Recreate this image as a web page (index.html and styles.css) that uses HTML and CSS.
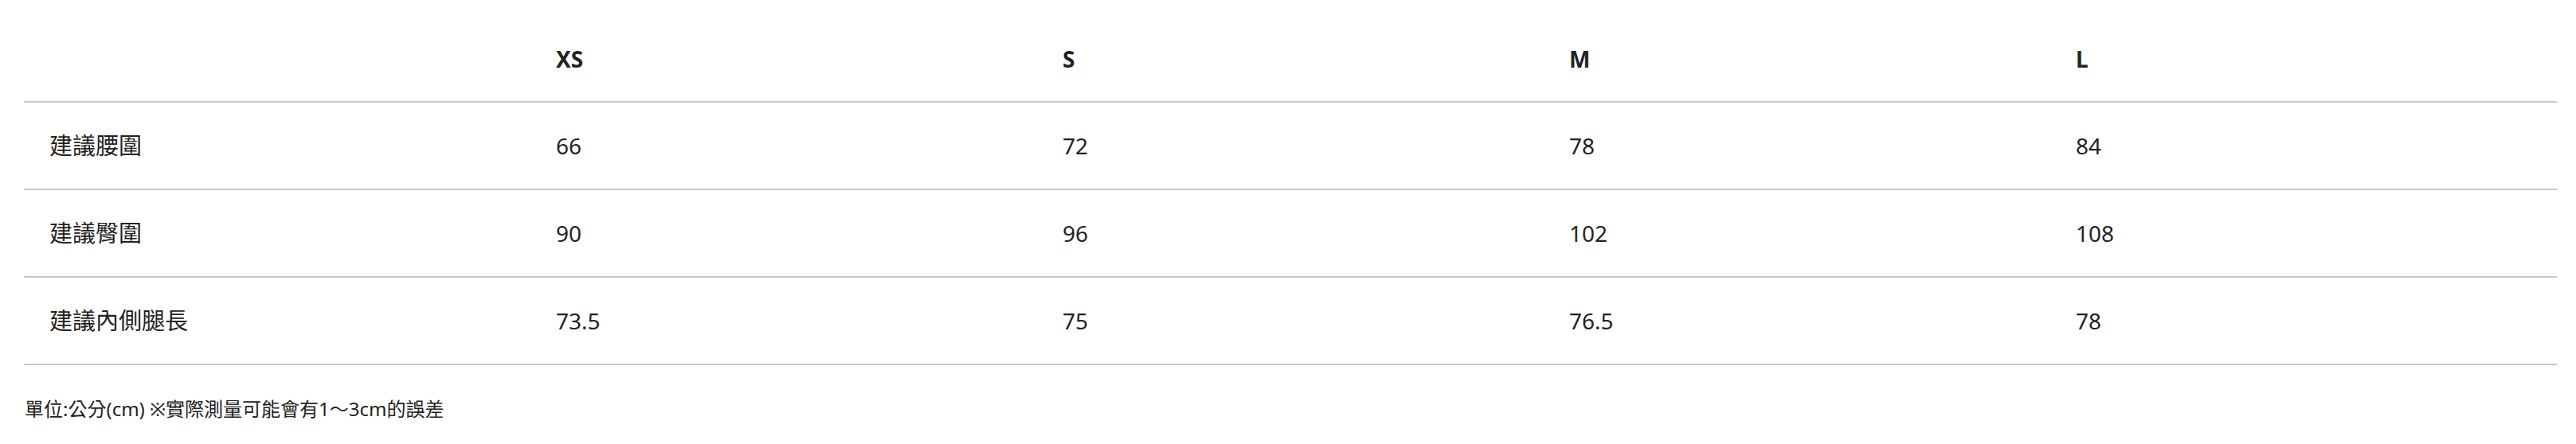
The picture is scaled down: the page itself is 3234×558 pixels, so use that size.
FILE: index.html
```html
<!DOCTYPE html>
<html lang="zh-Hant">
<head>
<meta charset="utf-8">
<title>尺寸表</title>
<link rel="stylesheet" href="styles.css">
</head>
<body>
<div class="size-chart">
  <table class="size-table">
    <thead>
      <tr>
        <th></th>
        <th>XS</th>
        <th>S</th>
        <th>M</th>
        <th>L</th>
      </tr>
    </thead>
    <tbody>
      <tr>
        <td class="label">建議腰圍</td>
        <td>66</td>
        <td>72</td>
        <td>78</td>
        <td>84</td>
      </tr>
      <tr>
        <td class="label">建議臀圍</td>
        <td>90</td>
        <td>96</td>
        <td>102</td>
        <td>108</td>
      </tr>
      <tr>
        <td class="label">建議內側腿長</td>
        <td>73.5</td>
        <td>75</td>
        <td>76.5</td>
        <td>78</td>
      </tr>
    </tbody>
  </table>
  <p class="note">單位:公分(cm) ※實際測量可能會有1～3cm的誤差</p>
</div>
</body>
</html>
```
FILE: styles.css
```css
html, body {
  margin: 0;
  padding: 0;
  background: #ffffff;
}

body {
  font-family: "Noto Sans", "Noto Sans CJK TC", sans-serif;
  color: #222222;
}

.size-chart {
  padding: 20px 24px 0 30px;
}

.size-table {
  width: 3180px;
  table-layout: fixed;
  border-collapse: collapse;
  border-spacing: 0;
}

.size-table th,
.size-table td {
  width: 20%;
  padding: 0 0 0 32px;
  text-align: left;
  vertical-align: middle;
  font-size: 28px;
  line-height: 40px;
  border-bottom: 2px solid #c8c8c8;
}

.size-table th {
  height: 107px;
  font-weight: 700;
}

.size-table td {
  height: 108px;
  font-weight: 400;
}

.size-table td.label {
  font-size: 29px;
}

.note {
  margin: 38px 0 0 1px;
  font-size: 24px;
  line-height: 34px;
  color: #222222;
}
```
